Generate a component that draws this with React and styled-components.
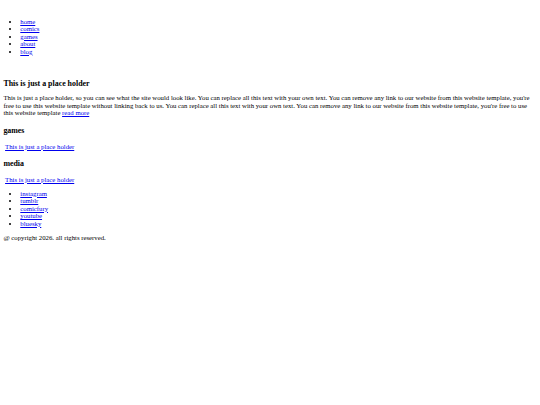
import React from 'react';
import styled, { createGlobalStyle } from 'styled-components';

const GlobalStyle = createGlobalStyle`
  html, body {
    margin: 0;
    padding: 0;
    background: #ffffff;
  }
  body {
    font-family: "Liberation Serif", "Times New Roman", serif;
    font-size: 6.75px;
    line-height: 7.6px;
    color: #000000;
  }
`;

const Page = styled.div`
  padding: 3.4px;
`;

const Header = styled.header`
  padding-top: 14.4px;
`;

const LinkList = styled.ul`
  margin: ${(p) => p.$top || 0}px 0 0;
  padding-left: 16.9px;
  list-style: disc;
`;

const LinkItem = styled.li`
  line-height: 7.5px;
`;

const Link = styled.a`
  color: #0000ee;
  text-decoration: underline;
`;

const Main = styled.main`
  padding-top: 23.5px;
`;

const Title = styled.h3`
  margin: ${(p) => p.$top || 0}px 0 ${(p) => p.$bottom || 6.6}px;
  font-size: 7.9px;
  line-height: 9px;
  font-weight: bold;
`;

const Text = styled.p`
  margin: 0;
  line-height: 7.55px;
`;

const Footer = styled.footer`
  margin-top: 7.4px;
`;

const nav = ['home', 'comics', 'games', 'about', 'blog'];
const media = ['instagram', 'tumblr', 'comicfury', 'youtube', 'bluesky'];

const App = () => (
  <Page>
    <GlobalStyle />
    <Header>
      <LinkList>
        {nav.map((item) => (
          <LinkItem key={item}><Link href="#">{item}</Link></LinkItem>
        ))}
      </LinkList>
    </Header>
    <Main>
      <section>
        <Title>This is just a place holder</Title>
        <Text>
          This is just a place holder, so you can see what the site would look like.
          You can replace all this text with your own text. You can remove any link to our
          website from this website template, you're free to use this website template without
          linking back to us. You can replace all this text with your own text. You can remove
          any link to our website from this website template, you're free to use this website
          template
          {' '}
          <Link href="#">read more</Link>
        </Text>
      </section>
      <section>
        <Title $top={8.9} $bottom={7.7}>games</Title>
        <Text>
          &nbsp;
          <Link href="#">This is just a place holder</Link>
        </Text>
      </section>
      <section>
        <Title $top={8.7} $bottom={7.7}>media</Title>
        <Text>
          &nbsp;
          <Link href="#">This is just a place holder</Link>
        </Text>
        <LinkList $top={6.45}>
          {media.map((item) => (
            <LinkItem key={item}><Link href="#">{item}</Link></LinkItem>
          ))}
        </LinkList>
      </section>
    </Main>
    <Footer>@ copyright 2026. all rights reserved.</Footer>
  </Page>
);

export default App;
